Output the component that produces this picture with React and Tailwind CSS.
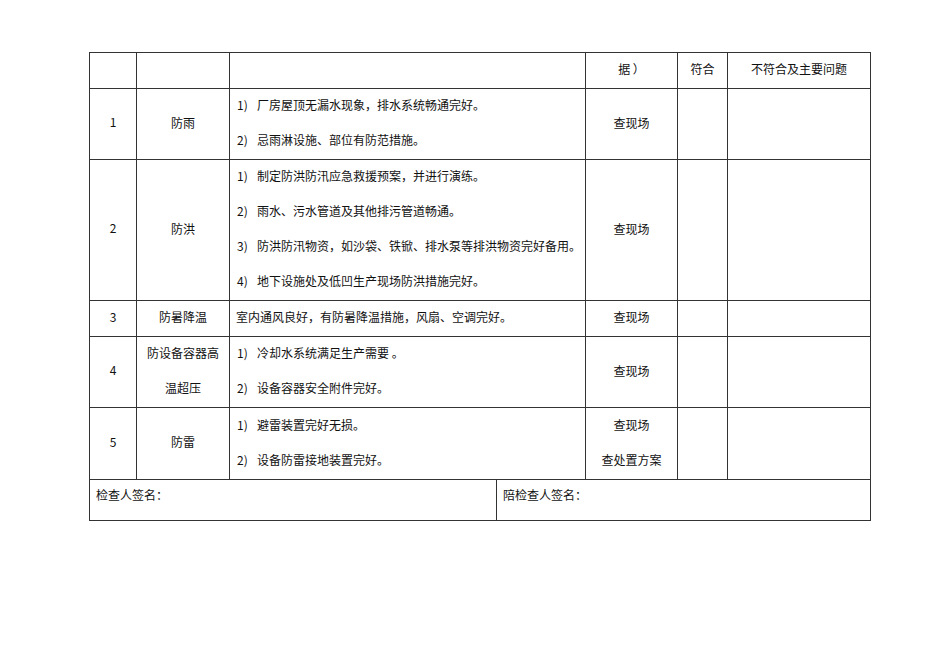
const font = { fontFamily: '"Noto Sans CJK SC", "Noto Sans", sans-serif' }

const rows = [
  {
    no: '1',
    name: ['防雨'],
    h: 'h-[70px]',
    items: ['厂房屋顶无漏水现象，排水系统畅通完好。', '忌雨淋设施、部位有防范措施。'],
    method: ['查现场'],
  },
  {
    no: '2',
    name: ['防洪'],
    h: 'h-[140px]',
    items: [
      '制定防洪防汛应急救援预案，并进行演练。',
      '雨水、污水管道及其他排污管道畅通。',
      '防洪防汛物资，如沙袋、铁锨、排水泵等排洪物资完好备用。',
      '地下设施处及低凹生产现场防洪措施完好。',
    ],
    method: ['查现场'],
  },
  {
    no: '3',
    name: ['防暑降温'],
    h: 'h-[35px]',
    plain: '室内通风良好，有防暑降温措施，风扇、空调完好。',
    method: ['查现场'],
  },
  {
    no: '4',
    name: ['防设备容器高', '温超压'],
    h: 'h-[70px]',
    items: ['冷却水系统满足生产需要 。', '设备容器安全附件完好。'],
    method: ['查现场'],
  },
  {
    no: '5',
    name: ['防雷'],
    h: 'h-[71px]',
    items: ['避雷装置完好无损。', '设备防雷接地装置完好。'],
    method: ['查现场', '查处置方案'],
  },
]

function Cell({ children, className = '' }) {
  return (
    <div className={`bg-white flex flex-col items-center justify-center text-center pb-[4px] ${className}`}>
      {children}
    </div>
  )
}

export default function App() {
  return (
    <div className="w-[950px] h-[672px] bg-white pt-[52px] pl-[89px] text-[12px] text-[#111]" style={font}>
      <div className="w-[782px]">
        <div className="grid grid-cols-[46px_92px_355px_91px_49px_142px] gap-px p-px bg-[#333]">
          <Cell className="h-[35px]" />
          <Cell className="h-[35px]" />
          <Cell className="h-[35px]" />
          <Cell className="h-[35px] leading-[20px]">据 ）</Cell>
          <Cell className="h-[35px] leading-[20px]">符合</Cell>
          <Cell className="h-[35px] leading-[20px]">不符合及主要问题</Cell>

          {rows.map((r) => (
            <div key={r.no} className="contents">
              <Cell className={`${r.h} leading-[20px]`}>{r.no}</Cell>
              <Cell className={`${r.h} leading-[35px]`}>
                {r.name.map((n) => (
                  <span key={n}>{n}</span>
                ))}
              </Cell>
              <div className={`bg-white ${r.h} flex flex-col justify-center pl-[7px] pb-[4px] leading-[35px]`}>
                {r.plain ? (
                  <span className="-ml-px">{r.plain}</span>
                ) : (
                  r.items.map((t, i) => (
                    <div key={i} className="flex">
                      <span className="w-[20px] shrink-0">{i + 1})</span>
                      <span>{t}</span>
                    </div>
                  ))
                )}
              </div>
              <Cell className={`${r.h} leading-[35px]`}>
                {r.method.map((m) => (
                  <span key={m}>{m}</span>
                ))}
              </Cell>
              <Cell className={r.h} />
              <Cell className={r.h} />
            </div>
          ))}
        </div>
        <div className="grid grid-cols-[406px_373px] gap-px px-px pb-px bg-[#333]">
          <div className="bg-white h-[40px] pl-[6px] pt-[5px] leading-[20px]">检查人签名：</div>
          <div className="bg-white h-[40px] pl-[6px] pt-[5px] leading-[20px]">陪检查人签名：</div>
        </div>
      </div>
    </div>
  )
}
